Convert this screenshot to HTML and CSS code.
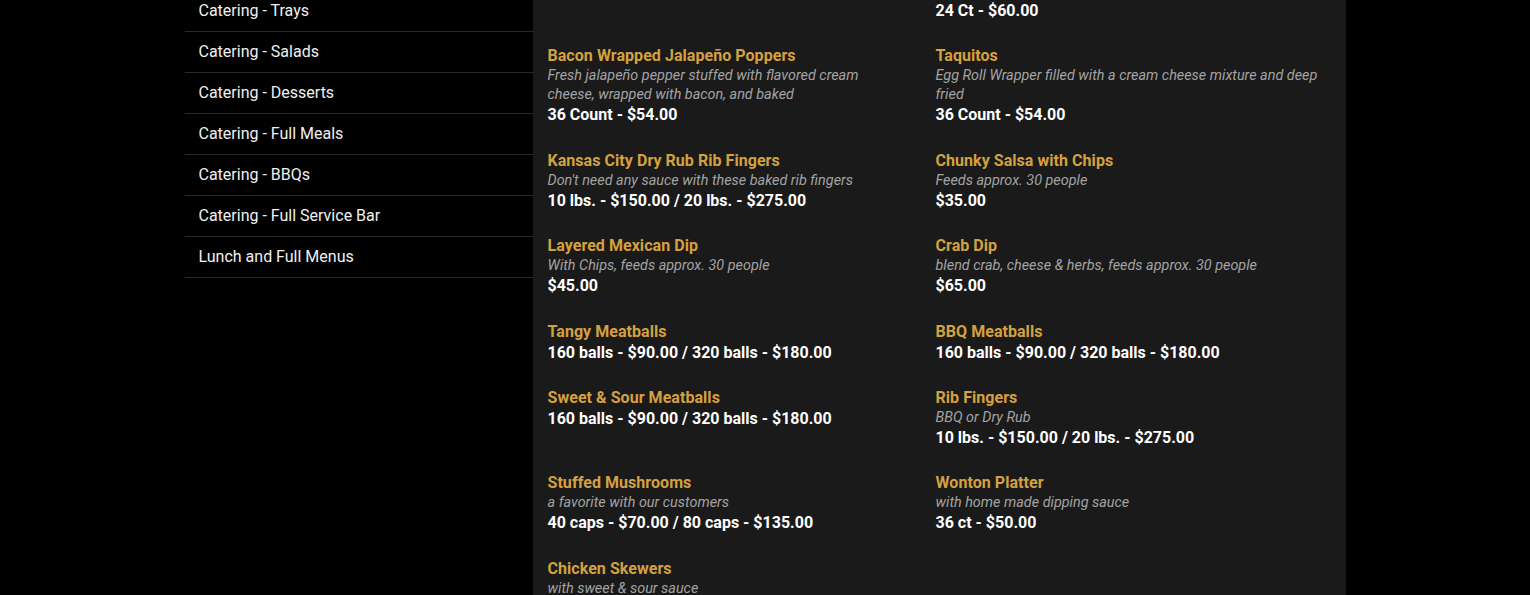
FILE: index.html
```html
<!DOCTYPE html>
<html lang="en">
<head>
<meta charset="utf-8">
<title>Catering - Appetizers</title>
<link rel="stylesheet" href="styles.css">
</head>
<body>
<div class="page">
  <aside class="sidebar">
    <ul class="nav">
      <li><a href="#">Catering - Trays</a></li>
      <li><a href="#">Catering - Salads</a></li>
      <li><a href="#">Catering - Desserts</a></li>
      <li><a href="#">Catering - Full Meals</a></li>
      <li><a href="#">Catering - BBQs</a></li>
      <li><a href="#">Catering - Full Service Bar</a></li>
      <li><a href="#">Lunch and Full Menus</a></li>
    </ul>
  </aside>
  <main class="content">
    <div class="menu-grid">
      <div class="item"></div>
      <div class="item">
        <div class="price">24 Ct - $60.00</div>
      </div>

      <div class="item">
        <div class="title">Bacon Wrapped Jalapeño Poppers</div>
        <div class="desc">Fresh jalapeño pepper stuffed with flavored cream cheese, wrapped with bacon, and baked</div>
        <div class="price">36 Count - $54.00</div>
      </div>
      <div class="item">
        <div class="title">Taquitos</div>
        <div class="desc">Egg Roll Wrapper filled with a cream cheese mixture and deep fried</div>
        <div class="price">36 Count - $54.00</div>
      </div>

      <div class="item">
        <div class="title">Kansas City Dry Rub Rib Fingers</div>
        <div class="desc">Don't need any sauce with these baked rib fingers</div>
        <div class="price">10 lbs. - $150.00 / 20 lbs. - $275.00</div>
      </div>
      <div class="item">
        <div class="title">Chunky Salsa with Chips</div>
        <div class="desc">Feeds approx. 30 people</div>
        <div class="price">$35.00</div>
      </div>

      <div class="item">
        <div class="title">Layered Mexican Dip</div>
        <div class="desc">With Chips, feeds approx. 30 people</div>
        <div class="price">$45.00</div>
      </div>
      <div class="item">
        <div class="title">Crab Dip</div>
        <div class="desc">blend crab, cheese &amp; herbs, feeds approx. 30 people</div>
        <div class="price">$65.00</div>
      </div>

      <div class="item">
        <div class="title">Tangy Meatballs</div>
        <div class="price">160 balls - $90.00 / 320 balls - $180.00</div>
      </div>
      <div class="item">
        <div class="title">BBQ Meatballs</div>
        <div class="price">160 balls - $90.00 / 320 balls - $180.00</div>
      </div>

      <div class="item">
        <div class="title">Sweet &amp; Sour Meatballs</div>
        <div class="price">160 balls - $90.00 / 320 balls - $180.00</div>
      </div>
      <div class="item">
        <div class="title">Rib Fingers</div>
        <div class="desc">BBQ or Dry Rub</div>
        <div class="price">10 lbs. - $150.00 / 20 lbs. - $275.00</div>
      </div>

      <div class="item">
        <div class="title">Stuffed Mushrooms</div>
        <div class="desc">a favorite with our customers</div>
        <div class="price">40 caps - $70.00 / 80 caps - $135.00</div>
      </div>
      <div class="item">
        <div class="title">Wonton Platter</div>
        <div class="desc">with home made dipping sauce</div>
        <div class="price">36 ct - $50.00</div>
      </div>

      <div class="item">
        <div class="title">Chicken Skewers</div>
        <div class="desc">with sweet &amp; sour sauce</div>
        <div class="price">50 skewers - $100.00</div>
      </div>
      <div class="item"></div>
    </div>
  </main>
</div>
</body>
</html>
```

FILE: styles.css
```css
* {
  box-sizing: border-box;
}

html, body {
  margin: 0;
  padding: 0;
  background: #000;
  height: 100%;
  overflow: hidden;
}

body {
  font-family: Roboto, "Noto Sans", Arial, sans-serif;
  color: #eee;
}

.page {
  width: 1161px;
  margin: -9px auto 0;
  display: flex;
  align-items: stretch;
  min-height: 700px;
}

.sidebar {
  width: 348px;
  flex: none;
  background: #000;
}

.nav {
  list-style: none;
  margin: 0;
  padding: 0;
}

.nav li {
  border-bottom: 1px solid #2a2a2a;
}

.nav a {
  display: block;
  height: 40px;
  line-height: 40px;
  padding-left: 14px;
  font-size: 16px;
  color: #f0f0f0;
  text-decoration: none;
}

.content {
  flex: 1;
  background: #1a1a1a;
  padding: 9px 14px 40px 15px;
}

.menu-grid {
  display: grid;
  grid-template-columns: 360px 1fr;
  column-gap: 28px;
  row-gap: 25px;
}

.item-gap {
  display: none;
}

.title {
  font-size: 16px;
  font-weight: 700;
  line-height: 20px;
  color: #d4a13e;
  letter-spacing: 0.05px;
}

.desc {
  font-size: 14.4px;
  font-style: italic;
  line-height: 19px;
  color: #a3a3a3;
}

.price {
  font-size: 16px;
  font-weight: 700;
  line-height: 21.4px;
  color: #fff;
}
```
